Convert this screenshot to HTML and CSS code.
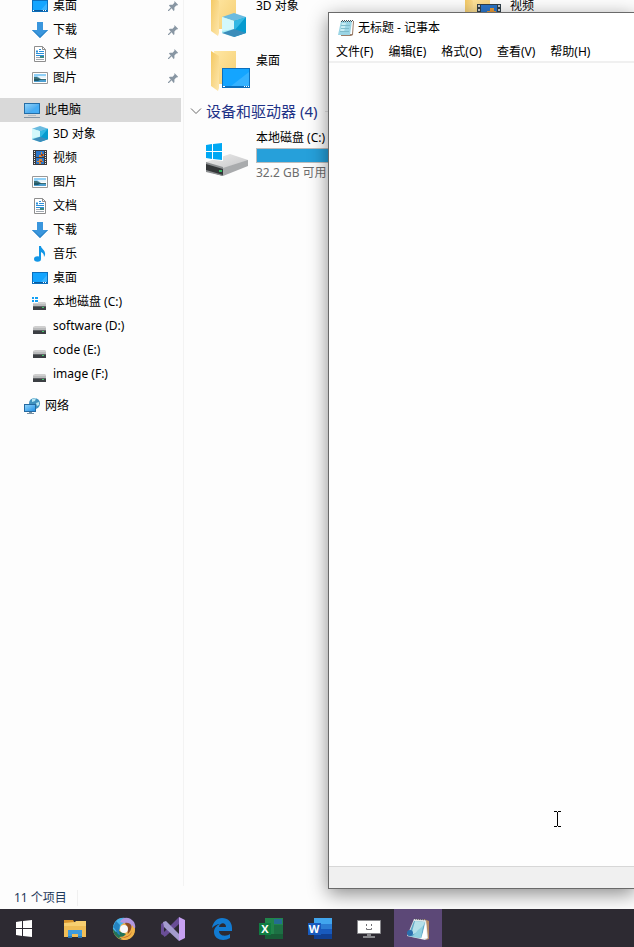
FILE: index.html
```html
<!DOCTYPE html>
<html lang="zh-CN">
<head>
    <meta charset="UTF-8">
    <title>无标题 - 记事本</title>
    <link rel="stylesheet" href="styles.css">
</head>
<body>
<svg class="sprite" aria-hidden="true">
    <defs>
        <linearGradient id="g-screen" x1="0" y1="0" x2="1" y2="1">
            <stop offset="0" stop-color="#8fd3fb"/><stop offset="1" stop-color="#2492e6"/>
        </linearGradient>
        <linearGradient id="g-folder" x1="0" y1="0" x2="1" y2="1">
            <stop offset="0" stop-color="#ffe7a3"/><stop offset="1" stop-color="#f5ce72"/>
        </linearGradient>
        <linearGradient id="g-front" x1="0" y1="0" x2="1" y2="1">
            <stop offset="0" stop-color="#f4c861"/><stop offset="1" stop-color="#fde7ae"/>
        </linearGradient>
        <linearGradient id="g-disk" x1="0" y1="0" x2="1" y2="1">
            <stop offset="0" stop-color="#ececec"/><stop offset="1" stop-color="#c3c3c5"/>
        </linearGradient>
    </defs>
    <symbol id="i-desktop" viewBox="0 0 16 16">
        <path fill="#0b6fbd" d="M0 2h16v12H0z"/>
        <path fill="#14a5ff" d="M1 3h14v9H1z"/>
        <path fill="#3bb4ff" d="M15 5v7H9z"/>
        <path fill="#0a5a9c" d="M1 12h14v1H1z"/>
        <path fill="#fff" d="M1 12h1v1H1zM11 12h1v1h-1zM13 12h1v1h-1z"/>
    </symbol>
    <symbol id="i-download" viewBox="0 0 16 16">
        <path fill="#3a96dd" d="M5 0h6v8h5l-8 8-8-8h5z"/>
        <path fill="#2b84c8" d="M0 8l8 8 8-8h-1l-7 6-7-6z"/>
    </symbol>
    <symbol id="i-doc" viewBox="0 0 16 16">
        <path fill="#fff" stroke="#8e8e8e" d="M2.500 .5h8l3 3v12h-11z"/>
        <path fill="none" stroke="#8e8e8e" d="M10.500 .5v3h3"/>
        <path fill="none" stroke="#2b8fd8" d="M7 3.500h2M4 5.500h2M7 5.500h5M4 7.500h8M5 4v3M4 9.500h8"/>
        <path fill="none" stroke="#a0a8b0" d="M4 11.500h4M4 13.500h8"/>
        <path fill="#3d8a86" d="M8 10h4v2H8z"/>
    </symbol>
    <symbol id="i-picture" viewBox="0 0 16 16">
        <path fill="#fff" stroke="#989898" d="M.5 2.500h15v11H.5z"/>
        <path fill="#8fd0f7" d="M2 4h12v4H2z"/>
        <path fill="#e6f4fb" d="M5 6h9v2H8z"/>
        <path fill="#3c6e75" d="M2 7h3l4 2h5v1H2z"/>
        <path fill="#4d9fd0" d="M2 10h12v2H2z"/>
        <path fill="#215a6a" d="M2 9h8l-4 2H2z"/>
    </symbol>
    <symbol id="i-pc" viewBox="0 0 16 16">
        <path fill="#256da6" d="M0 1h16v11H0z"/>
        <path fill="url(#g-screen)" d="M1 2h14v9H1z"/>
        <path fill="#46adf5" d="M15 2v9H6z"/>
        <path fill="#b4bcc4" d="M4 13h8v1H4z"/>
        <path fill="#8494a3" d="M0 15h16v1H0z"/>
    </symbol>
    <symbol id="i-cube" viewBox="0 0 24 24">
        <path fill="#6bbbe0" d="M12 0l12 4-12 4L0 4z"/>
        <path fill="#a7eef6" d="M0 4l12 4v16L0 20z"/>
        <path fill="#069bcf" d="M24 4L12 8v16l12-4z"/>
        <path fill="#d3f8fb" d="M0 4l12 4v8L0 18z"/>
        <path fill="#32b8e3" d="M12 8l12-4-12 14z"/>
        <path fill="#3c8dba" d="M0 20l12-4 12 4-12 4z"/>
    </symbol>
    <symbol id="i-video" viewBox="0 0 16 16">
        <path fill="#3b3a3c" d="M1 0h14v15H1z"/>
        <path fill="#2b75c9" d="M4 1h8v6H4zM4 8h8v6H4z"/>
        <path fill="#d98a3a" d="M9 2h1v2h2v2h-2v1H7V5h2zM7 9h3v2h1v1h-2v2H7v-2H5v-1h2z"/>
        <path fill="#8f3f24" d="M9 4h2v2H9zM8 11h2v1H8z"/>
        <path stroke="#e8e8e8" stroke-dasharray="1 1" d="M2.500 1v14M13.500 1v14"/>
    </symbol>
    <symbol id="i-music" viewBox="0 0 16 16">
        <ellipse cx="5.500" cy="13" rx="3.500" ry="2.700" fill="#1296e6"/>
        <path fill="#1296e6" d="M7 0h2c0 3 5 4 4 9l-1 2c0-3-1-4-3-5v7H7z"/>
    </symbol>
    <symbol id="i-drive" viewBox="0 0 16 16">
        <path fill="#cfcfcf" d="M3 8h10l1 1v2H1V9z"/>
        <path fill="#b9babb" d="M1 10h13v2H1z"/>
        <path fill="#3c3f43" d="M1 12h13v4H1z"/>
        <path fill="#5f6366" d="M1 12h13v1H1z"/>
        <path fill="#43c46a" d="M10 13h2v1h-2z"/>
    </symbol>
    <symbol id="i-sysdrive" viewBox="0 0 16 16">
        <use href="#i-drive"/>
        <path fill="#fdfdfd" d="M0 3h6v6H0z"/>
        <path fill="#12a0f5" d="M0 3h2v2H0zM3 3h3v2H3zM0 6h2v2H0zM3 6h3v2H3z"/>
    </symbol>
    <symbol id="i-network" viewBox="0 0 16 16">
        <circle cx="10.500" cy="5.500" r="5.500" fill="#4192be"/>
        <path fill="#b7e6f2" d="M8 1l4-1-1 3-3 1zM12 5l3-1v3l-2 1z"/>
        <path fill="#2569a0" d="M0 6h12v8H0z"/>
        <path fill="url(#g-screen)" d="M1 7h10v6H1z"/>
        <path fill="#7892a5" d="M5 14h3v1H5zM3 15h7v1H3z"/>
    </symbol>
    <symbol id="i-pin" viewBox="0 0 12 12">
        <path fill="#8896a3" d="M7 0l4 4-1 1-1 0-2 2v3l-1 1-2-3-3 3H0v-1l3-3L1 5l1-1h3l2-2z"/>
    </symbol>
    <symbol id="i-folder" viewBox="0 0 48 48">
        <path fill="url(#g-folder)" d="M8 5h22v33H13z"/>
        <path fill="url(#g-front)" d="M5 5l8 5v32l-1 3-7-5z"/>
    </symbol>
    <symbol id="i-notepad" viewBox="0 0 16 16">
        <path fill="#9b7e6a" d="M4 1h12l-1 14-2 1H3z"/>
        <path fill="#fff" d="M3 1h12l-1 13H2z"/>
        <path fill="#9bd5e5" d="M3 1h11l-2 14H0z"/>
        <path fill="#caedf4" d="M4 3h4L6 12H2z"/>
        <path fill="none" stroke="#7fbccc" d="M3 5.500h9M3 8.500h8M2 11.500h9"/>
        <path fill="none" stroke="#47555b" stroke-dasharray="1 1" d="M4 .5h11M3 1.500h11"/>
    </symbol>
</svg>

<main class="desktop">
    <section class="explorer">
        <div class="explorer-body">
            <nav class="tree">
                <ul class="tree-group">
                    <li><a href="#"><svg class="icon"><use href="#i-desktop"/></svg><span>桌面</span><svg class="pin"><use href="#i-pin"/></svg></a></li>
                    <li><a href="#"><svg class="icon"><use href="#i-download"/></svg><span>下载</span><svg class="pin"><use href="#i-pin"/></svg></a></li>
                    <li><a href="#"><svg class="icon"><use href="#i-doc"/></svg><span>文档</span><svg class="pin"><use href="#i-pin"/></svg></a></li>
                    <li><a href="#"><svg class="icon"><use href="#i-picture"/></svg><span>图片</span><svg class="pin"><use href="#i-pin"/></svg></a></li>
                </ul>
                <ul class="tree-group">
                    <li><a class="root active" href="#"><svg class="icon"><use href="#i-pc"/></svg><span>此电脑</span></a></li>
                    <li><a href="#"><svg class="icon"><use href="#i-cube"/></svg><span>3D 对象</span></a></li>
                    <li><a href="#"><svg class="icon"><use href="#i-video"/></svg><span>视频</span></a></li>
                    <li><a href="#"><svg class="icon"><use href="#i-picture"/></svg><span>图片</span></a></li>
                    <li><a href="#"><svg class="icon"><use href="#i-doc"/></svg><span>文档</span></a></li>
                    <li><a href="#"><svg class="icon"><use href="#i-download"/></svg><span>下载</span></a></li>
                    <li><a href="#"><svg class="icon"><use href="#i-music"/></svg><span>音乐</span></a></li>
                    <li><a href="#"><svg class="icon"><use href="#i-desktop"/></svg><span>桌面</span></a></li>
                    <li><a href="#"><svg class="icon"><use href="#i-sysdrive"/></svg><span>本地磁盘 (C:)</span></a></li>
                    <li><a href="#"><svg class="icon"><use href="#i-drive"/></svg><span>software (D:)</span></a></li>
                    <li><a href="#"><svg class="icon"><use href="#i-drive"/></svg><span>code (E:)</span></a></li>
                    <li><a href="#"><svg class="icon"><use href="#i-drive"/></svg><span>image (F:)</span></a></li>
                </ul>
                <ul class="tree-group">
                    <li><a class="root" href="#"><svg class="icon"><use href="#i-network"/></svg><span>网络</span></a></li>
                </ul>
            </nav>
            <div class="files">
                <div class="tiles">
                    <a class="tile" href="#">
                        <svg class="tile-icon" viewBox="0 0 48 48"><use href="#i-folder"/><use href="#i-cube" x="16" y="22" width="24" height="24"/></svg>
                        <span class="tile-name">3D 对象</span>
                    </a>
                    <a class="tile" href="#">
                        <svg class="tile-icon" viewBox="0 0 48 48">
                            <use href="#i-folder"/>
                            <path fill="#31404a" d="M17 13h24v20H17z"/>
                            <path fill="#2b75c9" d="M21 14h16v18H21z"/>
                            <path fill="#e79a38" d="M30 17h4v4h-4zM27 20h9v4h-9z"/>
                            <path stroke="#c8ccd0" stroke-width="2" stroke-dasharray="2 2" d="M19 14v18M39 14v18"/>
                        </svg>
                        <span class="tile-name">视频</span>
                    </a>
                    <a class="tile" href="#">
                        <svg class="tile-icon" viewBox="0 0 48 48">
                            <use href="#i-folder"/>
                            <path fill="#0b6fbd" d="M16 22h28v20H16z"/>
                            <path fill="#14a5ff" d="M17 23h26v17H17z"/>
                            <path fill="#35b2ff" d="M43 26v14H25z"/>
                            <path fill="#fff" d="M17 40h2v1h-2zM38 40h1v1h-1zM40 40h1v1h-1zM42 40h1v1h-1z"/>
                        </svg>
                        <span class="tile-name">桌面</span>
                    </a>
                </div>
                <h2 class="group-title">
                    <svg class="chevron" viewBox="0 0 12 12"><path d="M1 3.500l5 5 5-5" fill="none" stroke="#6b6b6b"/></svg>
                    <span>设备和驱动器 (4)</span>
                </h2>
                <div class="tiles">
                    <a class="tile" href="#">
                        <svg class="tile-icon" viewBox="0 0 48 48">
                            <path fill="url(#g-disk)" d="M0 32l24-8 18 6v3l-25 8L0 36z"/>
                            <path fill="#a9abad" d="M17 38l25-8v6l-25 10z"/>
                            <path fill="#343739" d="M0 33l17 5v8L0 41z"/>
                            <path fill="#8c8f91" d="M0 32l17 5v2L0 34zM0 40l17 5v1L0 42z"/>
                            <path fill="#35bd62" d="M13 40h3v2h-3z"/>
                            <path fill="#fff" d="M0 14l17-2v19L0 29z"/>
                            <path fill="#00a8f3" d="M0 15l6-1v7H0zM7 14l9-1v8H7zM0 22h6v7l-6-1zM7 22h9v8l-9-1z"/>
                        </svg>
                        <span class="drive-info">
                            <span>本地磁盘 (C:)</span>
                            <span class="usage"><span class="usage-fill" style="width: 72%"></span></span>
                            <span class="free">32.2 GB 可用</span>
                        </span>
                    </a>
                </div>
            </div>
        </div>
        <footer class="explorer-status"><span>11 个项目</span></footer>
    </section>

    <section class="notepad">
        <header class="notepad-title">
            <svg class="icon"><use href="#i-notepad"/></svg>
            <span>无标题 - 记事本</span>
        </header>
        <div class="menu">
            <button type="button">文件(F)</button>
            <button type="button">编辑(E)</button>
            <button type="button">格式(O)</button>
            <button type="button">查看(V)</button>
            <button type="button">帮助(H)</button>
        </div>
        <textarea class="notepad-text" aria-label="文本编辑器"></textarea>
        <footer class="notepad-status"></footer>
    </section>
    <svg class="cursor" viewBox="0 0 7 16"><path d="M0 .5h3M4 .5h3M3.500 1v14M0 15.500h3M4 15.500h3" stroke="#000" fill="none"/></svg>
</main>

<footer class="taskbar">
    <button class="start" type="button" aria-label="开始">
        <svg viewBox="0 0 24 24"><path fill="#fff" d="M4 5l6-1v7H4zM11 4l9-1v8h-9zM4 12h6v7l-6-1zM11 12h9v8l-9-1z"/></svg>
    </button>
    <button type="button" aria-label="文件资源管理器">
        <svg viewBox="0 0 24 24">
            <path fill="#d9952c" d="M1 3h9l2 3H1z"/>
            <path fill="#f7cf70" d="M1 6l11-1 1-1h10v16H1z"/>
            <path fill="#efbd56" d="M1 9h22v11H1z"/>
            <path fill="#3d9bdd" d="M5 13h14v8h-4v-4H9v4H5z"/>
            <path fill="#2579b8" d="M5 19h4v2H5zM15 19h4v2h-4z"/>
        </svg>
    </button>
    <button type="button" aria-label="浏览器">
        <svg viewBox="0 0 24 24">
            <circle cx="12" cy="12" r="11" fill="#f1b348"/>
            <path fill="#22745a" d="M1 9C0 16 4 21 9 22l5-5-7-3-3-7z"/>
            <path fill="#49b3ed" d="M1 12C1 5 6 0 13 1l2 3-6 4-2 6-3 1z"/>
            <path fill="#2483bf" d="M1 10c4 3 3 7 7 8l-1-5 1-5-4-4z"/>
            <path fill="#b197df" d="M8 5c3-6 10-5 14 0 2 4 1 6 1 6l-4 1-4-5z"/>
            <path fill="#8d4c25" d="M13 6c6-1 8 4 6 8l-3 4-1-8z"/>
            <path fill="#f1b348" d="M20 8c6 7 1 15-8 15l-5-3c6 0 12-3 13-12z"/>
            <path fill="#bf6b2b" d="M7 20c6 1 11-1 13-6-1 6-7 8-13 6z"/>
            <circle cx="12" cy="12" r="4" fill="#f8f8fb"/>
        </svg>
    </button>
    <button type="button" aria-label="Visual Studio">
        <svg viewBox="0 0 24 24">
            <path fill="#694d96" d="M0 7l3-2v14l-3-2z"/>
            <path fill="#694d96" d="M3 15L18 0v7L5 19l-2 1z"/>
            <path fill="#a49bce" d="M2 5l3-1 13 13v7L3 10z"/>
            <path fill="#c7a1f2" d="M18 0l6 3v18l-6 3z"/>
        </svg>
    </button>
    <button type="button" aria-label="Edge">
        <svg viewBox="0 0 24 24">
            <path fill="#127bd2" d="M2 11C3 5 7 1 12 1c6 0 10 4 10 10v3H9c0 5 7 6 11 3v4c-6 4-16 2-16-6 0-4 3-7 6-8-3 0-6 2-8 4zM9 10h7c0-5-6-5-7 0z"/>
        </svg>
    </button>
    <button type="button" aria-label="Excel">
        <svg viewBox="0 0 24 24">
            <path fill="#21854b" d="M6 1h18v21H6z"/>
            <path fill="#246c91" d="M15 2h8v5h-8z"/>
            <path fill="#185c37" d="M6 17h18v5H6z"/>
            <path fill="#1d7044" d="M15 8h9v9h-9z"/>
            <path fill="#107c41" d="M0 6h12v12H0z"/>
            <text class="app-letter" x="6" y="16">X</text>
        </svg>
    </button>
    <button type="button" aria-label="Word">
        <svg viewBox="0 0 24 24">
            <path fill="#41a5ee" d="M6 1h18v6H6z"/>
            <path fill="#2b7cd3" d="M6 7h18v5H6z"/>
            <path fill="#185abd" d="M6 12h18v5H6z"/>
            <path fill="#103f91" d="M6 17h18v5H6z"/>
            <path fill="#185abd" d="M0 6h13v12H0z"/>
            <text class="app-letter" x="6" y="16">W</text>
        </svg>
    </button>
    <button type="button" aria-label="录屏">
        <svg viewBox="0 0 24 24">
            <path fill="#fff" stroke="#88888c" d="M.5 3.500h23v13H.5z"/>
            <path fill="#88888c" d="M10 17h4v2h4v2H6v-2h4z"/>
            <path fill="none" stroke="#707074" d="M9.500 7v2M14.500 7v2M9.500 11v1.500h5V11"/>
        </svg>
    </button>
    <button class="running" type="button" aria-label="记事本">
        <svg viewBox="0 0 24 24">
            <path fill="#b98b64" d="M18 2l5 2v18l-3 1z"/>
            <path fill="#dfe5e6" d="M8 2l12 1 2 18-3 2-18-4z"/>
            <path fill="#5fa6c6" d="M8 4l11 1-3 16-14-2z"/>
            <path fill="#b5dfe9" d="M9 4l10 1-4 9-10 4z"/>
            <path fill="#8fcfdf" d="M12 13l5-4-2 12-9-1z"/>
            <path fill="#fff" d="M20 5l1 16-6 1z"/>
            <circle cx="4" cy="16" r="3" fill="#2a6fae"/>
            <path stroke="#575458" stroke-dasharray="1 1" d="M9 2l12 1"/>
        </svg>
    </button>
</footer>
</body>
</html>
```

FILE: styles.css
```css
*{
    margin:0;
    padding:0;
    box-sizing: border-box;
}
body{
    display:flex;
    flex-direction: column;
    height:100vh;
    overflow:hidden;
    font:12px/16px "Noto Sans", "Noto Sans CJK SC", sans-serif;
    color:#000;
    background-color: #fdfdfd;
}
ul{
    list-style: none;
}
a{
    color:inherit;
    text-decoration: none;
}
button{
    border:none;
    background:none;
    font:inherit;
    color:inherit;
}
svg{
    display:block;
    flex:none;
}
.sprite{
    position:absolute;
    width:0;
    height:0;
}
.icon{
    width:16px;
    height:16px;
}
.desktop{
    position:relative;
    flex:1;
    min-height:0;
    overflow:hidden;
}

/* explorer */
.explorer{
    display:flex;
    flex-direction: column;
    height:100%;
}
.explorer-body{
    display:flex;
    flex:1;
    min-height:0;
    overflow:hidden;
}
.tree{
    flex:none;
    width:184px;
    padding-right:2px;
    border-right:1px solid #f3f3f3;
}
/* the list is scrolled a little */
.tree-group:first-child{
    margin-top:-6px;
}
.tree-group{
    margin-bottom:8px;
}
.tree-group a{
    display:flex;
    align-items: center;
    gap:5px;
    height:24px;
    padding:0 2px 0 32px;
}
.tree-group a.root{
    padding-left:24px;
}
.tree-group a.active{
    background-color: #d9d9d9;
}
.tree-group span{
    padding-bottom:1px;
}
.pin{
    width:11px;
    height:11px;
    margin-left:auto;
}
.files{
    flex:1;
    min-width:0;
    margin-top:-9px;
    padding-left:22px;
}
.tiles{
    display:grid;
    grid-template-columns: repeat(2, 254px);
    row-gap:7px;
}
.tile{
    display:flex;
    gap:2px;
}
.tile-icon{
    width:48px;
    height:48px;
}
.tile-name{
    padding-top:7px;
}
.group-title{
    display:flex;
    align-items: center;
    gap:4px;
    height:22px;
    margin:6px 0 8px -16px;
    font-size:15px;
    font-weight:normal;
    color:#1e3287;
}
.group-title:after{
    content:'';
    flex:1;
    height:1px;
    margin-left:4px;
    background-color: #e2e2e2;
}
.chevron{
    width:12px;
    height:12px;
}
.drive-info{
    display:flex;
    flex-direction: column;
    gap:2px;
    width:184px;
}
.usage{
    height:15px;
    border:1px solid #bcbcbc;
    background-color: #e6e6e6;
}
.usage-fill{
    display:block;
    height:100%;
    background-color: #26a0da;
}
.free{
    color:#6d6d6d;
}
.explorer-status{
    display:flex;
    align-items: center;
    height:23px;
    padding-left:14px;
    color:#1e395b;
}
.explorer-status span{
    padding-right:10px;
    border-right:1px solid #f0f0f0;
}

/* notepad */
.notepad{
    position:absolute;
    top:12px;
    right:-1px;
    bottom:20px;
    left:328px;
    display:flex;
    flex-direction: column;
    border:1px solid #6a6a6a;
    background-color: #fff;
    box-shadow: 0 5px 18px rgba(0,0,0,.45);
}
.notepad-title{
    display:flex;
    align-items: center;
    gap:4px;
    height:30px;
    padding-left:9px;
}
.menu{
    display:flex;
    align-items: center;
    gap:15px;
    height:20px;
    padding-left:7px;
    border-bottom:2px solid #f0f0f0;
}
.notepad-text{
    flex:1;
    border:none;
    outline:none;
    resize:none;
    background-color: #fefefe;
}
.notepad-status{
    height:22px;
    border-top:1px solid #d7d7d7;
    background-color: #f0f0f0;
}
.cursor{
    position:absolute;
    top:811px;
    left:554px;
    width:7px;
    height:16px;
}

/* taskbar */
.taskbar{
    display:flex;
    gap:1px;
    height:38px;
    background-color: #2d2a32;
}
.taskbar button{
    display:flex;
    align-items: center;
    justify-content: center;
    width:48px;
    padding-top:2px;
}
.taskbar .start{
    margin-right:2px;
}
.taskbar svg{
    width:24px;
    height:24px;
}
.taskbar .running{
    background-color: #5c4877;
}
.app-letter{
    font:bold 11px "Open Sans", sans-serif;
    text-anchor:middle;
    fill:#fff;
}
```
